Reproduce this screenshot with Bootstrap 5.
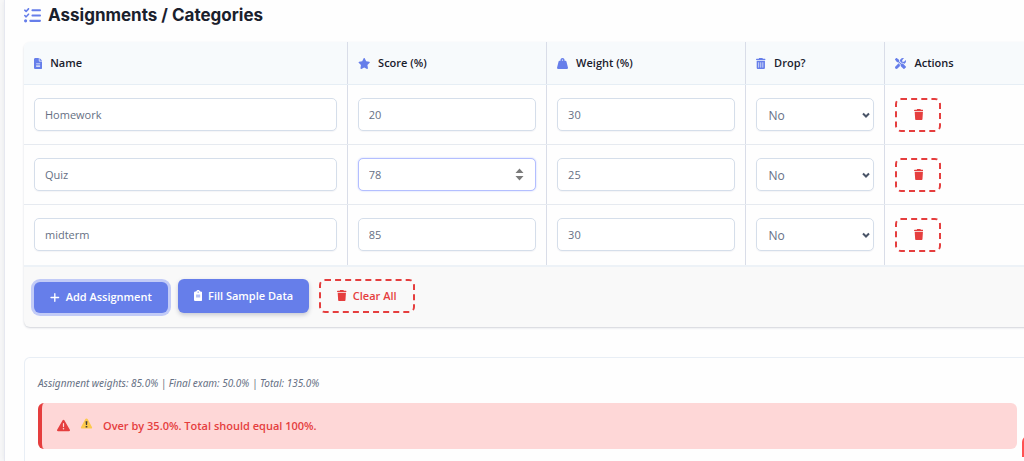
<!DOCTYPE html>
<html lang="en">
<head>
<meta charset="utf-8">
<meta name="viewport" content="width=device-width, initial-scale=1">
<title>Grade Calculator</title>
<link rel="stylesheet" href="https://cdn.jsdelivr.net/npm/bootstrap@5.3.0/dist/css/bootstrap.min.css">
<style>
  :root { --accent: #667eea; --danger: #e53e3e; --ink: #1a202c; --muted: #667084; --line: #e2e8f0; }
  body { font-family: "Open Sans", "Noto Sans", sans-serif; font-size: 11px; color: var(--ink); background: #f9f9f9; overflow-x: hidden; }
  .ico { height: 1em; width: auto; fill: currentColor; flex: none; }
  .surface { background: #fefefe; border-left: 1px solid #e6e8f0; box-shadow: 0 0 6px rgba(60,70,110,.1); padding: 4px 0 0 19px; margin-right: -7px; }
  .section-title { font-family: Inter, "Open Sans", sans-serif; font-size: 17px; font-weight: 700; line-height: 22px; gap: 7px; margin-bottom: 16px; }
  .section-title .ico, .grades th .ico { color: var(--accent); }
  .grades-box { border-radius: 6px; overflow: hidden; background: #f9f9f9; box-shadow: 0 1px 2px rgba(50,60,90,.22); flex: none; }
  .grades { table-layout: fixed; background: #fefefe; }
  .grades th { background: #f7fafc; font-size: 11px; font-weight: 600; line-height: 22px; padding: 10px; border-bottom: 1px solid #e6eef5; }
  .grades td { padding: 12px 10px; height: 60px; border-bottom: 1px solid #e6eaf0; }
  .grades th:not(:last-child), .grades td:not(:last-child) { border-right: 1px solid #d9dde8; }
  .grades tbody tr:last-child td { height: 61px; border-bottom: 2px solid #edf2f7; }
  .head-label { gap: 8px; }
  .grades .form-control, .grades .form-select { height: 33px; border: 1px solid #d5deea; border-radius: 5px; background-color: #fff; color: var(--muted); font-size: 11px; padding: 4px 10px; box-shadow: 0 1px 1px rgba(50,60,90,.05); }
  .grades .form-select { font-size: 12px; padding: 6px 20px 4px 11px; background-position: right 2px center; background-size: 10px 10px;
    background-image: url("data:image/svg+xml,%3Csvg xmlns='http://www.w3.org/2000/svg' viewBox='0 0 10 10'%3E%3Cpath d='M2 3.5l3 3 3-3' fill='none' stroke='%234a5568' stroke-width='2'/%3E%3C/svg%3E"); }
  .grades .form-control.is-active { border-color: #b3beff; box-shadow: 0 0 2px #c3ccff; }
  .grades input[type=number] { appearance: textfield; -moz-appearance: textfield; }
  .grades input::-webkit-inner-spin-button { appearance: none; margin: 0; }
  .spinner-mark { position: absolute; right: 12px; top: 10px; width: 9px; height: 13px; fill: #7b7b7b; pointer-events: none; }
  .act { font-size: 11px; font-weight: 600; line-height: 18px; border-radius: 6px; gap: 6px; height: 34px; padding: 0 16px; }
  .act-solid, .act-solid:hover { background: var(--accent); color: #fff; border: 0; box-shadow: 0 2px 4px rgba(50,60,90,.25); }
  .act-solid.is-active { height: 31px; box-shadow: 0 0 0 3px #c2cbf7; }
  .act-outline, .act-outline:hover { color: var(--danger); border: 2px dashed var(--danger); background: transparent; }
  .act-row { width: 46px; padding: 0; }
  .toolbar { padding: 12px 10px 14px; gap: 10px; }
  .summary { border: 1px solid #e8eef5; border-bottom: 0; border-radius: 6px 6px 0 0; margin-top: 30px; padding: 16px 13px 12px; }
  .weights { font-family: "Noto Sans", sans-serif; font-style: italic; color: var(--muted); font-size: 10px; line-height: 18px; margin-bottom: 11px; }
  .over { background: #fed7d7; color: var(--danger); border: 0; border-left: 4px solid var(--danger); border-radius: 6px; font-weight: 600; padding: 14px 15px; line-height: 18px; margin: 0; gap: 10px; }
  .over .ico { font-size: 13px; }
  .corner-tab { right: -42px; bottom: 4px; width: 44px; height: 21px; background: #ff5252; border: 0; border-radius: 6px 6px 0 0; }
</style>
</head>
<body>
<svg class="d-none" aria-hidden="true">
  <symbol id="i-trash" viewBox="0 0 448 512"><path d="M135.200 17.700L128 32H32C14.300 32 0 46.300 0 64s14.300 32 32 32h384c17.700 0 32-14.300 32-32s-14.300-32-32-32h-96l-7.200-14.300C307.400 6.800 296.300 0 284.200 0H163.800c-12.100 0-23.200 6.800-28.600 17.700zM416 128H32l21.200 339c1.600 25.300 22.600 45 47.900 45h245.800c25.300 0 46.300-19.700 47.900-45z"/></symbol>
  <symbol id="i-bin" viewBox="0 0 448 512"><path fill-rule="evenodd" d="M135.200 17.700L128 32H32C14.300 32 0 46.300 0 64s14.300 32 32 32h384c17.700 0 32-14.300 32-32s-14.300-32-32-32h-96l-7.200-14.300C307.400 6.800 296.300 0 284.200 0H163.800c-12.100 0-23.200 6.800-28.600 17.700zM32 128v320c0 35.300 28.700 64 64 64h256c35.300 0 64-28.700 64-64V128zm112 80v224c0 8.800-7.200 16-16 16s-16-7.200-16-16V208c0-8.800 7.200-16 16-16s16 7.200 16 16zm96 0v224c0 8.800-7.200 16-16 16s-16-7.200-16-16V208c0-8.800 7.200-16 16-16s16 7.200 16 16zm96 0v224c0 8.800-7.200 16-16 16s-16-7.200-16-16V208c0-8.800 7.200-16 16-16s16 7.200 16 16z"/></symbol>
  <symbol id="i-warn" viewBox="0 0 512 512"><path fill-rule="evenodd" d="M256 32c14.200 0 27.300 7.500 34.500 19.800l216 368c7.300 12.400 7.300 27.700.2 40.100S486.300 480 472 480H40c-14.300 0-27.600-7.700-34.700-20.100s-7-27.800.2-40.100l216-368C228.700 39.500 241.800 32 256 32zm0 128c-13.300 0-24 10.700-24 24v112c0 13.300 10.700 24 24 24s24-10.700 24-24V184c0-13.300-10.700-24-24-24zm32 224a32 32 0 1 0-64 0 32 32 0 1 0 64 0z"/></symbol>
</svg>

<main class="surface ms-1 min-vh-100 d-flex flex-column">
  <h2 class="section-title d-flex align-items-center">
    <svg class="ico" viewBox="0 0 512 512" aria-hidden="true"><path d="M152.100 38.200c9.900 8.900 10.700 24 1.800 33.900l-72 80c-4.400 4.900-10.600 7.800-17.200 7.900s-12.900-2.400-17.600-7L7 113C-2.300 103.600-2.300 88.400 7 79s24.600-9.400 33.900 0l22.100 22.100 55.100-61.200c8.900-9.900 24-10.700 33.900-1.800zm0 160c9.900 8.900 10.700 24 1.800 33.900l-72 80c-4.400 4.900-10.600 7.800-17.200 7.900s-12.900-2.400-17.600-7L7 273c-9.400-9.400-9.400-24.600 0-33.900s24.600-9.400 33.900 0l22.100 22.100 55.100-61.200c8.900-9.900 24-10.700 33.900-1.800zM224 96c0-17.700 14.300-32 32-32h224c17.700 0 32 14.300 32 32s-14.300 32-32 32H256c-17.700 0-32-14.300-32-32zm0 160c0-17.700 14.300-32 32-32h224c17.700 0 32 14.300 32 32s-14.300 32-32 32H256c-17.700 0-32-14.300-32-32zm-64 160c0-17.700 14.300-32 32-32h288c17.700 0 32 14.300 32 32s-14.300 32-32 32H192c-17.700 0-32-14.300-32-32zM48 368a48 48 0 1 1 0 96 48 48 0 1 1 0-96z"/></svg>
    Assignments / Categories
  </h2>

  <div class="grades-box">
    <table class="grades w-100">
      <colgroup><col style="width:32.1%"><col style="width:19.8%"><col style="width:19.8%"><col style="width:13.8%"><col></colgroup>
      <thead>
        <tr>
          <th scope="col"><span class="head-label d-flex align-items-center"><svg class="ico" viewBox="0 0 384 512" aria-hidden="true"><path fill-rule="evenodd" d="M64 0C28.700 0 0 28.700 0 64v384c0 35.300 28.700 64 64 64h256c35.300 0 64-28.700 64-64V160H256c-17.700 0-32-14.300-32-32V0zm192 0v128h128zM112 256h160c8.800 0 16 7.200 16 16s-7.200 16-16 16H112c-8.800 0-16-7.200-16-16s7.200-16 16-16zm0 64h160c8.800 0 16 7.200 16 16s-7.200 16-16 16H112c-8.800 0-16-7.200-16-16s7.200-16 16-16zm0 64h160c8.800 0 16 7.200 16 16s-7.200 16-16 16H112c-8.800 0-16-7.200-16-16s7.200-16 16-16z"/></svg>Name</span></th>
          <th scope="col"><span class="head-label d-flex align-items-center"><svg class="ico" viewBox="0 0 576 512" aria-hidden="true"><path d="M316.900 18C311.600 7 300.400 0 288.100 0s-23.400 7-28.800 18L195 150.300 51.400 171.500c-12 1.800-22 10.200-25.700 21.700s-.7 24.200 7.900 32.700L137.800 329 113.200 474.700c-2 12 3 24.200 12.900 31.300s23 8 33.800 2.300l128.300-68.500 128.300 68.500c10.800 5.700 23.900 4.900 33.800-2.300s14.900-19.300 12.900-31.300L438.500 329l104.200-103.100c8.600-8.500 11.700-21.200 7.900-32.700s-13.700-19.900-25.700-21.700l-143.700-21.200z"/></svg>Score (%)</span></th>
          <th scope="col"><span class="head-label d-flex align-items-center"><svg class="ico" viewBox="0 0 512 512" aria-hidden="true"><path fill-rule="evenodd" d="M224 96a32 32 0 1 1 64 0 32 32 0 1 1-64 0zm122.500 32c3.500-10 5.500-20.800 5.500-32 0-53-43-96-96-96s-96 43-96 96c0 11.200 1.900 22 5.500 32H120c-22 0-41.200 15-46.600 36.400l-72 288C-2.200 466.600 1 481.600 10.300 493.300S32.900 512 48 512h416c15 0 29.200-6.900 38.400-18.700s12.500-26.800 8.800-41.300l-72-288C433.200 143 414 128 392 128z"/></svg>Weight (%)</span></th>
          <th scope="col"><span class="head-label d-flex align-items-center"><svg class="ico" viewBox="0 0 448 512" aria-hidden="true"><use href="#i-bin"/></svg>Drop?</span></th>
          <th scope="col"><span class="head-label d-flex align-items-center"><svg class="ico" viewBox="0 0 512 512" aria-hidden="true"><path d="M78.600 5C69.100-2.400 55.600-1.500 47 7L7 47c-8.500 8.500-9.400 22-2.100 31.600l80 104c4.500 5.900 11.600 9.400 19 9.400h54.100l109 109c-14.700 29-10 65.400 14.300 89.600l112 112c12.500 12.500 32.800 12.500 45.300 0l64-64c12.500-12.500 12.500-32.800 0-45.300l-112-112c-24.200-24.200-60.600-29-89.600-14.300l-109-109V104c0-7.500-3.500-14.500-9.400-19zM19.900 396.100C7.200 408.800 0 426.100 0 444.100 0 481.600 30.400 512 67.900 512c18 0 35.300-7.200 48-19.900L233.700 374.300c-7.800-20.900-9-43.600-3.600-65.100l-61.700-61.700zM512 144c0-10.500-1.100-20.700-3.200-30.500-2.400-11.200-16.100-14.100-24.200-6l-63.900 63.900c-3 3-7.100 4.700-11.300 4.700H352c-8.800 0-16-7.200-16-16v-57.500c0-4.200 1.700-8.300 4.700-11.300l63.900-63.900c8.100-8.100 5.200-21.800-6-24.200C388.700 1.100 378.500 0 368 0c-79.500 0-144 64.500-144 144v.8l85.300 85.300c36-9.100 75.800.5 104 28.700l15.700 15.700C478 251.400 512 201.700 512 144z"/></svg>Actions</span></th>
        </tr>
      </thead>
      <tbody>
        <tr>
          <td><input class="form-control" type="text" aria-label="Name" value="Homework"></td>
          <td><input class="form-control" type="number" aria-label="Score" value="20"></td>
          <td><input class="form-control" type="number" aria-label="Weight" value="30"></td>
          <td><select class="form-select" aria-label="Drop"><option>No</option><option>Yes</option></select></td>
          <td><button class="btn act act-outline act-row d-flex align-items-center justify-content-center" type="button" aria-label="Delete"><svg class="ico" viewBox="0 0 448 512"><use href="#i-trash"/></svg></button></td>
        </tr>
        <tr>
          <td><input class="form-control" type="text" aria-label="Name" value="Quiz"></td>
          <td><div class="position-relative"><input class="form-control is-active" type="number" aria-label="Score" value="78"><svg class="spinner-mark" viewBox="0 0 9 13" aria-hidden="true"><path d="M0.500 5L4.500 0.500l4 4.500zM0.500 8h8l-4 4.500z"/></svg></div></td>
          <td><input class="form-control" type="number" aria-label="Weight" value="25"></td>
          <td><select class="form-select" aria-label="Drop"><option>No</option><option>Yes</option></select></td>
          <td><button class="btn act act-outline act-row d-flex align-items-center justify-content-center" type="button" aria-label="Delete"><svg class="ico" viewBox="0 0 448 512"><use href="#i-trash"/></svg></button></td>
        </tr>
        <tr>
          <td><input class="form-control" type="text" aria-label="Name" value="midterm"></td>
          <td><input class="form-control" type="number" aria-label="Score" value="85"></td>
          <td><input class="form-control" type="number" aria-label="Weight" value="30"></td>
          <td><select class="form-select" aria-label="Drop"><option>No</option><option>Yes</option></select></td>
          <td><button class="btn act act-outline act-row d-flex align-items-center justify-content-center" type="button" aria-label="Delete"><svg class="ico" viewBox="0 0 448 512"><use href="#i-trash"/></svg></button></td>
        </tr>
      </tbody>
    </table>
    <div class="toolbar d-flex align-items-end">
      <button class="btn act act-solid is-active d-flex align-items-center" type="button"><svg class="ico" viewBox="0 0 448 512" aria-hidden="true"><path d="M256 80c0-17.700-14.300-32-32-32s-32 14.300-32 32v144H48c-17.700 0-32 14.300-32 32s14.300 32 32 32h144v144c0 17.700 14.300 32 32 32s32-14.300 32-32V288h144c17.700 0 32-14.300 32-32s-14.300-32-32-32H256z"/></svg>Add Assignment</button>
      <button class="btn act act-solid d-flex align-items-center" type="button"><svg class="ico" viewBox="0 0 384 512" aria-hidden="true"><path fill-rule="evenodd" d="M192 0c-41.800 0-77.400 26.700-90.500 64H64C28.700 64 0 92.700 0 128v320c0 35.300 28.700 64 64 64h256c35.300 0 64-28.700 64-64V128c0-35.300-28.700-64-64-64h-37.500C269.400 26.700 233.800 0 192 0zm0 64a32 32 0 1 1 0 64 32 32 0 1 1 0-64zM96 224h192v32H96zm0 80h192v32H96z"/></svg>Fill Sample Data</button>
      <button class="btn act act-outline d-flex align-items-center" type="button"><svg class="ico" viewBox="0 0 448 512" aria-hidden="true"><use href="#i-trash"/></svg>Clear All</button>
    </div>
  </div>

  <section class="summary flex-grow-1">
    <p class="weights">Assignment weights: 85.0% | Final exam: 50.0% | Total: 135.0%</p>
    <div class="over alert d-flex align-items-center" role="alert">
      <svg class="ico" viewBox="0 0 512 512" aria-hidden="true"><use href="#i-warn"/></svg>
      <svg class="ico mb-1" viewBox="0 0 14 14" aria-hidden="true"><path fill="#fcc94c" d="M7 1.500Q8 1.500 8.400 2.300L13 11q.4 1.500-1 1.500H2Q.6 12.500 1 11L5.600 2.300Q6 1.500 7 1.500z"/><path fill="#3f3a36" d="M6 4.500h2l-.4 4.200H6.400zM6.100 9.600h1.800v1.600H6.100z"/></svg>
      <span>Over by 35.0%. Total should equal 100%.</span>
    </div>
  </section>
</main>
<button class="corner-tab position-fixed" type="button" aria-label="Open panel"></button>
<script src="https://cdn.jsdelivr.net/npm/bootstrap@5.3.0/dist/js/bootstrap.bundle.min.js"></script>
</body>
</html>
